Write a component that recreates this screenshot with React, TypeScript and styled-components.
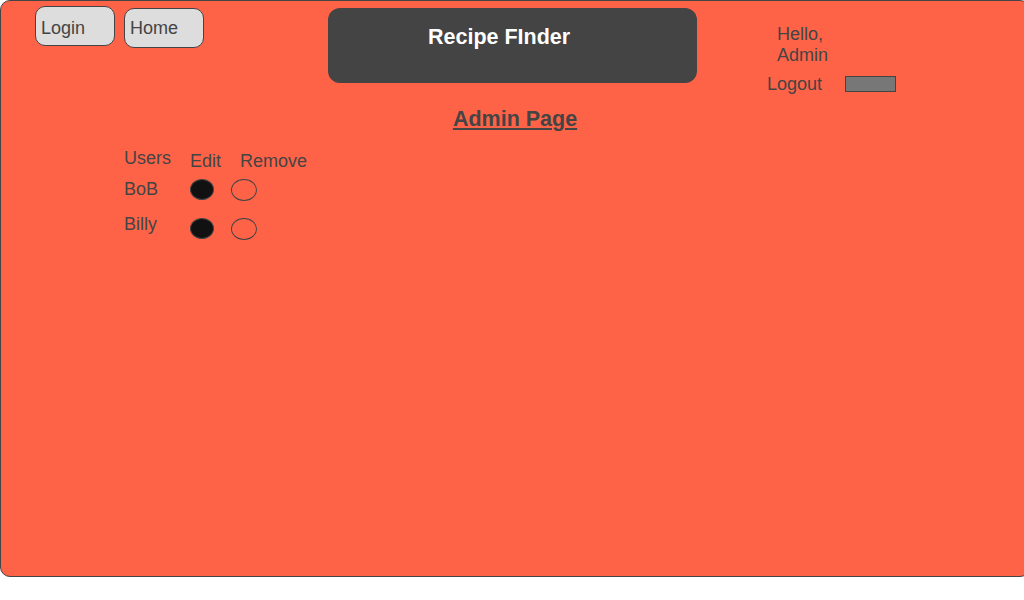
import React from "react";
import styled, { createGlobalStyle } from "styled-components";

const GlobalStyle = createGlobalStyle`
  html, body { margin: 0; padding: 0; background: #ffffff; overflow: hidden; }
  body { font-family: "Liberation Sans", Arial, sans-serif; color: #444444; }
  * { box-sizing: border-box; }
`;

const Frame = styled.div`
  width: 1030px;
  height: 577px;
  border: 1px solid #444444;
  border-radius: 10px;
  background: #ff6347;
  display: flex;
  flex-direction: column;
`;

const Header = styled.header`
  display: flex;
  align-items: flex-start;
  height: 100px;
  padding-left: 34px;
`;

const NavButton = styled.button<{ $top: number; $left: number; $pad: number }>`
  width: 80px;
  height: 40px;
  margin-top: ${(p) => p.$top}px;
  margin-left: ${(p) => p.$left}px;
  padding: ${(p) => p.$pad}px 0 0 5px;
  border: 1px solid #444444;
  border-radius: 10px;
  background: #dddddd;
  color: #444444;
  font-family: "Liberation Sans", Arial, sans-serif;
  font-size: 18px;
  text-align: left;
  line-height: 20px;
`;

const TitleBox = styled.div`
  width: 369px;
  height: 75px;
  margin-top: 7px;
  margin-left: 124px;
  border-radius: 12px;
  background: #444444;
  padding: 17px 0 0 100px;
`;

const Title = styled.h1`
  margin: 0;
  color: #ffffff;
  font-size: 21.5px;
  line-height: 24px;
  font-weight: bold;
`;

const UserArea = styled.div`
  display: flex;
  flex-direction: column;
  margin-top: 23px;
  margin-left: 70px;
`;

const Greeting = styled.div`
  padding-left: 10px;
  font-size: 18px;
  line-height: 21px;
`;

const LogoutRow = styled.div`
  display: flex;
  align-items: center;
  margin-top: 8px;
  height: 20px;
`;

const LogoutLabel = styled.span`
  width: 78px;
  font-size: 18px;
  line-height: 20px;
`;

const LogoutSwatch = styled.div`
  width: 51px;
  height: 16px;
  border: 1px solid #444444;
  background: #777777;
`;

const Heading = styled.h2`
  margin: 6px 0 0;
  text-align: center;
  font-size: 21.5px;
  line-height: 24px;
  font-weight: bold;
  text-decoration: underline;
  color: #444444;
`;

const Table = styled.div`
  display: flex;
  flex-direction: column;
  margin-top: 17px;
  padding-left: 123px;
`;

const Row = styled.div<{ $top: number }>`
  display: flex;
  align-items: flex-start;
  margin-top: ${(p) => p.$top}px;
`;

const Cell = styled.span<{ $width?: number; $offset?: number }>`
  width: ${(p) => (p.$width ? `${p.$width}px` : "auto")};
  padding-top: ${(p) => p.$offset ?? 0}px;
  font-size: 18px;
  line-height: 20px;
`;

const Dot = styled.span<{ $filled?: boolean; $offset: number }>`
  display: block;
  width: ${(p) => (p.$filled ? 24 : 26)}px;
  height: ${(p) => (p.$filled ? 21 : 22)}px;
  margin-top: ${(p) => p.$offset}px;
  margin-right: ${(p) => (p.$filled ? 17 : 0)}px;
  border-radius: 50%;
  border: 1px solid #444444;
  background: ${(p) => (p.$filled ? "#111111" : "transparent")};
`;

const users = [
  { name: "BoB", top: 8, dot: 0 },
  { name: "Billy", top: 13, dot: 4 },
];

export default function App() {
  return (
    <>
      <GlobalStyle />
      <Frame>
        <Header>
          <NavButton $top={5} $left={0} $pad={4}>Login</NavButton>
          <NavButton $top={7} $left={9} $pad={0}>Home</NavButton>
          <TitleBox>
            <Title>Recipe FInder</Title>
          </TitleBox>
          <UserArea>
            <Greeting>
              Hello,
              <br />
              Admin
            </Greeting>
            <LogoutRow>
              <LogoutLabel>Logout</LogoutLabel>
              <LogoutSwatch />
            </LogoutRow>
          </UserArea>
        </Header>
        <Heading>Admin Page</Heading>
        <Table>
          <Row $top={0}>
            <Cell $width={66}>Users</Cell>
            <Cell $width={50} $offset={3}>Edit</Cell>
            <Cell $offset={3}>Remove</Cell>
          </Row>
          {users.map((u) => (
            <Row key={u.name} $top={u.top}>
              <Cell $width={66}>{u.name}</Cell>
              <Dot $filled $offset={u.dot} />
              <Dot $offset={u.dot} />
            </Row>
          ))}
        </Table>
      </Frame>
    </>
  );
}
